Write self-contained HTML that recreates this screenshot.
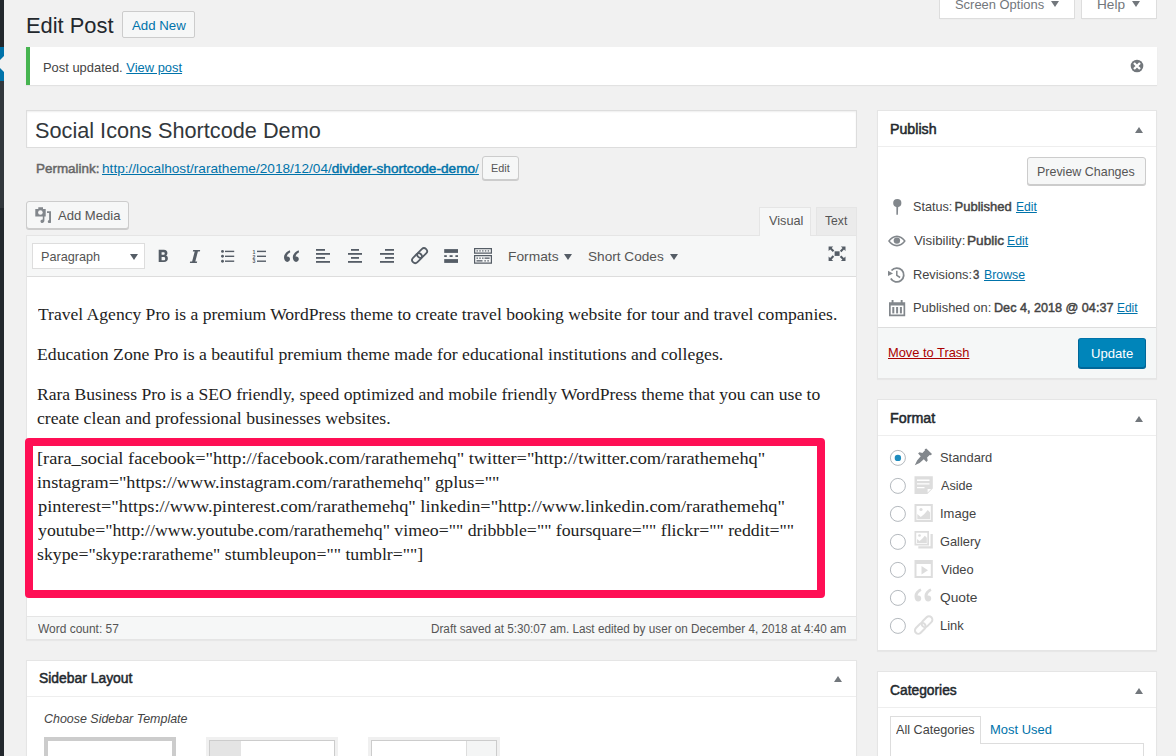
<!DOCTYPE html>
<html><head><meta charset="utf-8">
<style>
*{box-sizing:border-box;margin:0;padding:0}
html,body{width:1176px;height:756px;overflow:hidden;background:#f1f1f1;font-family:"Liberation Sans",sans-serif;color:#444;font-size:13px;position:relative}
.a{position:absolute}
.t{position:absolute;white-space:nowrap;line-height:1;transform-origin:0 0}
.sb{-webkit-text-stroke:0.45px}
.lnk{color:#0073aa;text-decoration:underline}
.btn{position:absolute;background:#f7f7f7;border:1px solid #ccc;border-radius:3px;box-shadow:0 1px 0 #ccc}
.box{position:absolute;background:#fff;border:1px solid #e5e5e5;box-shadow:0 1px 1px rgba(0,0,0,.04)}
.tri{position:absolute;width:0;height:0;border-left:4px solid transparent;border-right:4px solid transparent;border-bottom:6px solid #72777c}
.ic{position:absolute;fill:#555d66}
</style></head><body>
<!-- admin menu strip -->
<div class="a" style="left:0;top:0;width:4px;height:47px;background:#23282d"></div>
<div class="a" style="left:0;top:47px;width:4px;height:34px;background:#0073aa"></div>
<svg class="a" style="left:0;top:47px" width="4" height="34"><polygon points="4,9 -4,17 4,25" fill="#f1f1f1"/></svg>
<div class="a" style="left:0;top:81px;width:4px;height:127px;background:#32373c"></div>
<div class="a" style="left:0;top:208px;width:4px;height:548px;background:#23282d"></div>

<!-- Add New button -->
<div class="a" style="left:122px;top:11px;width:73px;height:27px;background:#f6f7f7;border:1px solid #ccc;border-radius:2px"></div>

<!-- screen options / help tabs -->
<div class="a" style="left:939px;top:-4px;width:136px;height:23px;background:#fff;border:1px solid #ddd;border-top:none;box-shadow:0 1px 1px -1px rgba(0,0,0,.1)"></div>
<div class="a" style="left:1050.5px;top:1px;width:0;height:0;border-left:4px solid transparent;border-right:4px solid transparent;border-top:6px solid #72777c"></div>
<div class="a" style="left:1081px;top:-4px;width:76px;height:23px;background:#fff;border:1px solid #ddd;border-top:none;box-shadow:0 1px 1px -1px rgba(0,0,0,.1)"></div>
<div class="a" style="left:1132px;top:1px;width:0;height:0;border-left:4px solid transparent;border-right:4px solid transparent;border-top:6px solid #72777c"></div>

<!-- notice -->
<div class="a" style="left:26px;top:47px;width:1131px;height:38px;background:#fff;border-left:4px solid #46b450;box-shadow:0 1px 1px rgba(0,0,0,.06)"></div>
<svg class="a" style="left:1130px;top:59px" width="14" height="14" viewBox="0 0 14 14"><circle cx="7" cy="7" r="6.3" fill="#72777c"/><path d="M4 4L10 10M10 4L4 10" stroke="#fff" stroke-width="2.3"/></svg>

<!-- title input -->
<div class="a" style="left:26px;top:110px;width:831px;height:38px;background:#fff;border:1px solid #ddd;box-shadow:inset 0 1px 2px rgba(0,0,0,.07)"></div>

<!-- permalink edit button -->
<div class="a" style="left:482px;top:156px;width:37px;height:24px;background:#f6f7f7;border:1px solid #ccc;border-radius:3px;box-shadow:0 1px 0 #ccc"></div>

<!-- add media button -->
<div class="a" style="left:26px;top:201px;width:103px;height:28px;background:#f6f7f7;border:1px solid #ccc;border-radius:3px;box-shadow:0 1px 0 #ccc"></div>
<svg class="a" style="left:30px;top:204px" width="24" height="22" viewBox="30 204 24 22"><g fill="#82878c"><path d="M35.3 209.1h3v-1.9h4.7v1.9h2.7v7.4h-10.4z"/><path d="M47 211.2h4v11c0 .8-.6 .9-1.6 .9s-1.6-.5-1.6-1.5c0-.9.7-1.4 1.3-1.5v-7h-2.1z"/><path d="M44.4 215v5.5c0 1.6-1 2.4-2.2 2.4-1 0-1.7-.6-1.7-1.5 0-1 .8-1.8 1.9-1.8.2 0 .3 0 .4 .1v-4.7z"/></g><circle cx="40.4" cy="212.5" r="2.3" fill="#f7f7f7"/></svg>

<!-- visual / text tabs -->
<div class="a" style="left:759px;top:207px;width:52px;height:30px;background:#f6f7f7;border:1px solid #e5e5e5;border-bottom:none"></div>
<div class="a" style="left:816px;top:207px;width:41px;height:29px;background:#ebebeb;border:1px solid #e5e5e5;border-bottom:none"></div>

<!-- editor frame -->
<div class="a" style="left:26px;top:235px;width:831px;height:382px;background:#fff;border:1px solid #e5e5e5"></div>
<div class="a" style="left:27px;top:236px;width:829px;height:41px;background:#f6f7f7;border-bottom:1px solid #ddd"></div>
<div class="a" style="left:760px;top:235px;width:50px;height:2px;background:#f6f7f7"></div>

<!-- formats arrows -->
<div class="a" style="left:564px;top:253.5px;width:0;height:0;border-left:4px solid transparent;border-right:4px solid transparent;border-top:6px solid #555d66"></div>
<div class="a" style="left:670px;top:253.5px;width:0;height:0;border-left:4px solid transparent;border-right:4px solid transparent;border-top:6px solid #555d66"></div>
<!-- paragraph select -->
<div class="a" style="left:32px;top:243px;width:113px;height:26px;background:#fff;border:1px solid #ddd"></div>
<div class="a" style="left:130px;top:254px;width:0;height:0;border-left:4px solid transparent;border-right:4px solid transparent;border-top:6px solid #555d66"></div>

<!-- toolbar icons -->
<svg class="a" style="left:150px;top:240px" width="700" height="30" viewBox="150 240 700 30">
 <g fill="#555d66">
  <!-- bold -->
  <path transform="translate(158.7 0) scale(0.9 1) translate(-158.7 0)" d="M158.7 249.7h5.8c2.6 0 3.9 1.5 3.9 3.3 0 1.2-.6 2.1-1.5 2.6 1.3.4 2 1.5 2 2.9 0 2.3-1.7 3.5-4.3 3.5h-5.9z M161.9 252.2v2.6h2.2c.8 0 1.3-.5 1.3-1.3s-.5-1.3-1.3-1.3z M161.9 257.1v3.1h2.5c.9 0 1.5-.6 1.5-1.55s-.6-1.55-1.5-1.55z" fill-rule="evenodd"/>
  <!-- italic -->
  <path d="M193.2 250h7l-.4 1.6h-1.9l-2.6 9.8h1.9l-.4 1.6h-7l.4-1.6h1.9l2.6-9.8h-1.9z"/>
  <!-- ul -->
  <circle cx="222.5" cy="251.4" r="1.45"/><circle cx="222.5" cy="256.3" r="1.45"/><circle cx="222.5" cy="261.2" r="1.45"/>
  <rect x="225" y="250.7" width="9.2" height="1.4"/><rect x="225" y="255.6" width="9.2" height="1.4"/><rect x="225" y="260.5" width="9.2" height="1.4"/>
  <!-- ol -->
  <text x="252.4" y="253.6" font-size="5.2" font-family="Liberation Sans" font-weight="bold">1</text>
  <text x="252.4" y="258.5" font-size="5.2" font-family="Liberation Sans" font-weight="bold">2</text>
  <text x="252.4" y="263.4" font-size="5.2" font-family="Liberation Sans" font-weight="bold">3</text>
  <rect x="257" y="250.7" width="9" height="1.4"/><rect x="257" y="255.6" width="9" height="1.4"/><rect x="257" y="260.5" width="9" height="1.4"/>
  <!-- quote -->
  <path d="M289.8 250.2c-3 1.2-5.8 3.8-5.8 7.1 0 2.6 1.4 4.6 3.3 4.6 1.6 0 2.7-1.2 2.7-2.8 0-1.5-1-2.6-2.5-2.6-.3 0-.6 0-.8.1.4-1.8 1.9-3.4 3.6-4.3z M298.6 250.2c-3 1.2-5.8 3.8-5.8 7.1 0 2.6 1.4 4.6 3.3 4.6 1.6 0 2.7-1.2 2.7-2.8 0-1.5-1-2.6-2.5-2.6-.3 0-.6 0-.8.1.4-1.8 1.9-3.4 3.6-4.3z"/>
  <!-- align left -->
  <rect x="316" y="249" width="9" height="1.8"/><rect x="316" y="253" width="14" height="1.8"/><rect x="316" y="257" width="9" height="1.8"/><rect x="316" y="261" width="14" height="1.8"/>
  <!-- align center -->
  <rect x="351" y="249" width="8" height="1.8"/><rect x="348" y="253" width="14" height="1.8"/><rect x="351" y="257" width="8" height="1.8"/><rect x="348" y="261" width="14" height="1.8"/>
  <!-- align right -->
  <rect x="385" y="249" width="9" height="1.8"/><rect x="380" y="253" width="14" height="1.8"/><rect x="385" y="257" width="9" height="1.8"/><rect x="380" y="261" width="14" height="1.8"/>
  <!-- more -->
  <rect x="444.2" y="249.1" width="13.8" height="3.8"/><rect x="444.2" y="259.1" width="13.8" height="3.8"/>
  <rect x="444.2" y="255.2" width="2.6" height="1.8"/><rect x="449.6" y="255.2" width="3" height="1.8"/><rect x="455.4" y="255.2" width="2.6" height="1.8"/>
  <!-- toggle -->
  <path d="M474 248h18v5.8h-18z M475.2 249.2v3.4h15.6v-3.4z" fill-rule="evenodd"/>
  <rect x="476.5" y="250.3" width="1.4" height="1.2"/><rect x="479.3" y="250.3" width="1.4" height="1.2"/><rect x="482.1" y="250.3" width="1.4" height="1.2"/><rect x="484.9" y="250.3" width="1.4" height="1.2"/><rect x="487.7" y="250.3" width="1.4" height="1.2"/>
  <path d="M474 255h18v8.8h-18z M475.2 256.2v6.4h15.6v-6.4z" fill-rule="evenodd"/>
  <rect x="476.5" y="257.5" width="1.4" height="1.3"/><rect x="479.3" y="257.5" width="1.4" height="1.3"/><rect x="482.1" y="257.5" width="1.4" height="1.3"/><rect x="484.6" y="257.5" width="5" height="1.3"/>
  <rect x="476.5" y="260.2" width="6" height="1.3"/><rect x="484.4" y="260.2" width="1.4" height="1.3"/><rect x="487.4" y="260.2" width="1.4" height="1.3"/>
  <!-- fullscreen -->
  <rect x="834.6" y="251.3" width="5" height="4.6"/>
  <path d="M828.6 246.5h4.6l-1.5 1.5 2.6 2.6-1.5 1.5-2.6-2.6-1.6 1.6z M845.5 246.5v4.6l-1.5-1.5-2.6 2.6-1.5-1.5 2.6-2.6-1.6-1.6z M828.6 261v-4.6l1.5 1.5 2.6-2.6 1.5 1.5-2.6 2.6 1.6 1.6z M845.5 261h-4.6l1.5-1.5-2.6-2.6 1.5-1.5 2.6 2.6 1.6-1.6z"/>
 </g>
 <!-- link -->
 <g fill="none" stroke="#555d66" stroke-width="1.8">
  <rect x="-5.6" y="-3.1" width="11.2" height="6.2" rx="3.1" transform="translate(422.2,253) rotate(-45)"/>
  <rect x="-5.6" y="-3.1" width="11.2" height="6.2" rx="3.1" transform="translate(417,258.2) rotate(-45)"/>
 </g>
</svg>

<!-- red highlight box -->
<div class="a" style="left:25px;top:438px;width:800px;height:160px;border:8px solid #ff0f55;border-radius:4px"></div>

<!-- status bar -->
<div class="a" style="left:26px;top:616px;width:831px;height:24px;background:#f6f7f7;border:1px solid #e5e5e5;box-shadow:0 1px 1px rgba(0,0,0,.04)"></div>

<!-- sidebar layout box -->
<div class="box" style="left:26px;top:660px;width:831px;height:140px"></div>
<div class="a" style="left:27px;top:696px;width:829px;height:1px;background:#eee"></div>
<div class="tri" style="left:834px;top:676px"></div>
<div class="a" style="left:44px;top:737px;width:132px;height:40px;border:4px solid #ccc;background:#fff"></div>
<div class="a" style="left:206px;top:737px;width:132px;height:40px;background:#f0f0f0"></div>
<div class="a" style="left:209px;top:740px;width:126px;height:40px;background:#fff;border:1px solid #ccc"></div>
<div class="a" style="left:210px;top:741px;width:31px;height:40px;background:#e4e4e4"></div>
<div class="a" style="left:368px;top:737px;width:132px;height:40px;background:#f0f0f0"></div>
<div class="a" style="left:371px;top:740px;width:126px;height:40px;background:#fff;border:1px solid #ccc"></div>
<div class="a" style="left:466px;top:741px;width:30px;height:40px;background:#f4f5f5;border-left:1px solid #ddd"></div>

<!-- publish box -->
<div class="box" style="left:877px;top:110px;width:280px;height:269px"></div>
<div class="a" style="left:878px;top:146px;width:278px;height:1px;background:#eee"></div>
<div class="tri" style="left:1135px;top:127px"></div>
<div class="a" style="left:1027px;top:157px;width:119px;height:28px;background:#f6f7f7;border:1px solid #ccc;border-radius:3px;box-shadow:0 1px 0 #ccc"></div>
<svg class="a" style="left:880px;top:190px" width="40" height="135" viewBox="880 190 40 135">
 <g fill="#82878c">
  <!-- pin -->
  <circle cx="897.3" cy="203.1" r="4.1"/><path d="M896.4 206h1.8l-.3 8.8h-1.5z"/>
  <!-- eye -->
  <path d="M888 241c2.3-3.3 5.4-5.4 8.9-5.4s6.6 2.1 8.9 5.4c-2.3 3.3-5.4 5.5-8.9 5.5s-6.6-2.2-8.9-5.5z M889.9 241c1.8 2.2 4.2 3.7 7 3.7s5.2-1.5 7-3.7c-1.8-2.2-4.2-3.7-7-3.7s-5.2 1.5-7 3.7z" fill-rule="evenodd"/>
  <circle cx="896.9" cy="240.6" r="3.2"/>
  <!-- history -->
 </g>
 <g fill="none" stroke="#82878c" stroke-width="1.8">
  <path d="M891.5 270.5A6.95 6.95 0 1 1 890.8 278.5"/>
  <path d="M896.8 270.8v4.6l3.3 2.1" stroke-width="1.5"/>
 </g>
 <g fill="#82878c">
  <path d="M888 270.8v5.2l5-2.4z"/>
  <!-- calendar -->
  <path d="M889 302.3h16.2v13.9h-16.2z M890.7 305.6v8.9h12.8v-8.9z" fill-rule="evenodd"/>
  <rect x="891.6" y="300" width="1.9" height="4.2"/><rect x="900.7" y="300" width="1.9" height="4.2"/>
  <rect x="892.3" y="307" width="2" height="6.4"/><rect x="896.1" y="307" width="2" height="6.4"/><rect x="899.9" y="307" width="2" height="6.4"/>
 </g>
</svg>
<div class="a" style="left:878px;top:327px;width:278px;height:51px;background:#f5f7f7;border-top:1px solid #ddd"></div>
<div class="a" style="left:1078px;top:338px;width:68px;height:30px;background:#0085ba;border:1px solid;border-color:#0073aa #006799 #006799;border-radius:3px;box-shadow:0 1px 0 #006799"></div>

<!-- format box -->
<div class="box" style="left:877px;top:399px;width:280px;height:252px"></div>
<div class="a" style="left:878px;top:435px;width:278px;height:1px;background:#eee"></div>
<div class="tri" style="left:1135px;top:416px"></div>
<svg class="a" style="left:880px;top:440px" width="60" height="200" viewBox="880 440 60 200">
 <g fill="#fff" stroke="#b4b9be" stroke-width="1">
  <circle cx="897.9" cy="457.9" r="7.5"/><circle cx="897.9" cy="485.9" r="7.5"/><circle cx="897.9" cy="513.9" r="7.5"/><circle cx="897.9" cy="541.9" r="7.5"/><circle cx="897.9" cy="569.9" r="7.5"/><circle cx="897.9" cy="597.9" r="7.5"/><circle cx="897.9" cy="625.9" r="7.5"/>
 </g>
 <circle cx="897.9" cy="457.9" r="3.2" fill="#1e8cbe"/>
 <!-- pin -->
 <path d="M926.3 448.4l5.7 5.7-1.2 1.2-1.1-.3-2.6 2.6.6 3-1.3 1.3-2.6-2.6-4.2 3.6-4.8 2.3 2.3-4.8 3.6-4.2-2.6-2.6 1.3-1.3 3 .6 2.6-2.6-.3-1.1z" fill="#82878c"/>
 <g fill="#ddd">
  <!-- aside -->
  <path d="M914.5 476.3h18.3v12.2l-5.5 5.5h-12.8z M917 479.5v1.4h12.5v-1.4z M917 483.2v1.4h12.5v-1.4z M917 486.9v1.4h7.5v-1.4z M927.6 489v3.5l3.5-3.5z" fill-rule="evenodd"/>
  <!-- image -->
  <path d="M914.5 504h18.3v18h-18.3z M916.5 506v14h14.3v-14z" fill-rule="evenodd"/>
  <path d="M917.3 519.3v-5.3l3.5 3 3.5-3 3.5-4 2.3 2.5v6.8z"/><circle cx="921" cy="509.5" r="1.6"/>
  <!-- gallery -->
  <g transform="translate(0 2)">
  <path d="M914.5 529h14.5v14.5h-14.5z M916.2 530.7v11.1h11.1v-11.1z" fill-rule="evenodd"/>
  <path d="M917 541v-4l2.6 2 2.6-2.2 2.6-3 2 2v5.2z"/><circle cx="919.5" cy="533.5" r="1.3"/>
  <path d="M930.5 532h2.3v14.5h-14.5v-2.3h12.2z"/>
  </g>
  <!-- video -->
  <path d="M914.5 560h18.3v18h-18.3z M916.5 564v12h14.3v-12z" fill-rule="evenodd"/>
  <path d="M921.5 566v8.5l6.5-4.25z"/>
  <!-- quote -->
  <path d="M920.5 588.5c-3.4 1.4-6 4.3-6 7.9 0 2.9 1.6 5.1 3.7 5.1 1.8 0 3-1.3 3-3.1 0-1.7-1.1-2.9-2.8-2.9-.3 0-.6 0-.9.1.4-2 2.1-3.8 4-4.8z M930.5 588.5c-3.4 1.4-6 4.3-6 7.9 0 2.9 1.6 5.1 3.7 5.1 1.8 0 3-1.3 3-3.1 0-1.7-1.1-2.9-2.8-2.9-.3 0-.6 0-.9.1.4-2 2.1-3.8 4-4.8z"/>
 </g>
 <g fill="none" stroke="#ddd" stroke-width="2">
  <rect x="-6.2" y="-3.4" width="12.4" height="6.8" rx="3.4" transform="translate(927,621.7) rotate(-45)"/>
  <rect x="-6.2" y="-3.4" width="12.4" height="6.8" rx="3.4" transform="translate(920.3,628.4) rotate(-45)"/>
 </g>
</svg>

<!-- categories box -->
<div class="box" style="left:877px;top:671px;width:280px;height:140px"></div>
<div class="a" style="left:878px;top:707px;width:278px;height:1px;background:#eee"></div>
<div class="tri" style="left:1135px;top:688px"></div>
<div class="a" style="left:890px;top:743px;width:254px;height:40px;border:1px solid #ddd;background:#fff"></div>
<div class="a" style="left:890px;top:716px;width:91px;height:28px;border:1px solid #ddd;border-bottom:none;background:#fff"></div>

<div class="t" style="left:25.74px;top:15.00px;font-size:22.3px;color:#23282d;transform:scaleX(0.9805);">Edit Post</div>
<div class="t" style="left:132.00px;top:19.00px;font-size:13px;color:#0073aa;transform:scaleX(1.0189);">Add New</div>
<div class="t" style="left:954.51px;top:-2.00px;font-size:13px;color:#72777c;transform:scaleX(0.9943);">Screen Options</div>
<div class="t" style="left:1097.35px;top:-2.00px;font-size:13px;color:#72777c;transform:scaleX(1.0480);">Help</div>
<div class="t" style="left:43.41px;top:61.00px;font-size:13px;color:#444;transform:scaleX(0.9935);">Post updated. <span class="lnk">View post</span></div>
<div class="t" style="left:34.71px;top:120.00px;font-size:22px;color:#32373c;transform:scaleX(0.9861);">Social Icons Shortcode Demo</div>
<div class="t" style="left:35.57px;top:162.00px;font-size:13px;color:#666;transform:scaleX(1.0333);"><span class="sb">Permalink:</span></div>
<div class="t" style="left:101.90px;top:162.00px;font-size:13px;color:#666;transform:scaleX(1.0493);"><span class="lnk">http://localhost/raratheme/2018/12/04/<span class="sb">divider-shortcode-demo</span>/</span></div>
<div class="t" style="left:490.82px;top:163.00px;font-size:11px;color:#555;transform:scaleX(0.9833);">Edit</div>
<div class="t" style="left:58.20px;top:209.00px;font-size:13px;color:#555;transform:scaleX(1.0048);">Add Media</div>
<div class="t" style="left:768.80px;top:214.00px;font-size:13px;color:#555;transform:scaleX(0.9765);">Visual</div>
<div class="t" style="left:825.40px;top:214.00px;font-size:13px;color:#555;transform:scaleX(0.9333);">Text</div>
<div class="t" style="left:41.13px;top:250.00px;font-size:13px;color:#555;transform:scaleX(0.9746);">Paragraph</div>
<div class="t" style="left:507.54px;top:250.00px;font-size:13px;color:#555;transform:scaleX(1.0609);">Formats</div>
<div class="t" style="left:587.95px;top:250.00px;font-size:13px;color:#555;transform:scaleX(1.0479);">Short Codes</div>
<div class="t" style="left:37.60px;top:306.00px;font-size:17px;font-family:'Liberation Serif',serif;color:#222;transform:scaleX(1.0329);">Travel Agency Pro is a premium WordPress theme to create travel booking website for tour and travel companies.</div>
<div class="t" style="left:36.56px;top:346.00px;font-size:17px;font-family:'Liberation Serif',serif;color:#222;transform:scaleX(1.0398);">Education Zone Pro is a beautiful premium theme made for educational institutions and colleges.</div>
<div class="t" style="left:36.57px;top:386.00px;font-size:17px;font-family:'Liberation Serif',serif;color:#222;transform:scaleX(1.0336);">Rara Business Pro is a SEO friendly, speed optimized and mobile friendly WordPress theme that you can use to</div>
<div class="t" style="left:36.56px;top:410.00px;font-size:17px;font-family:'Liberation Serif',serif;color:#222;transform:scaleX(1.0402);">create clean and professional businesses websites.</div>
<div class="t" style="left:36.92px;top:450.00px;font-size:17px;font-family:'Liberation Serif',serif;color:#222;transform:scaleX(1.0777);">[rara_social facebook="http://facebook.com/rarathemehq" twitter="http://twitter.com/rarathemehq"</div>
<div class="t" style="left:36.53px;top:474.00px;font-size:17px;font-family:'Liberation Serif',serif;color:#222;transform:scaleX(1.0694);">instagram="https://www.instagram.com/rarathemehq" gplus=""</div>
<div class="t" style="left:37.60px;top:498.00px;font-size:17px;font-family:'Liberation Serif',serif;color:#222;transform:scaleX(1.0765);">pinterest="https://www.pinterest.com/rarathemehq" linkedin="http://www.linkedin.com/rarathemehq"</div>
<div class="t" style="left:37.60px;top:522.00px;font-size:17px;font-family:'Liberation Serif',serif;color:#222;transform:scaleX(1.0448);">youtube="http://www.youtube.com/rarathemehq" vimeo="" dribbble="" foursquare="" flickr="" reddit=""</div>
<div class="t" style="left:36.56px;top:546.00px;font-size:17px;font-family:'Liberation Serif',serif;color:#222;transform:scaleX(1.0446);">skype="skype:raratheme" stumbleupon="" tumblr=""]</div>
<div class="t" style="left:37.50px;top:623.00px;font-size:12px;color:#555;transform:scaleX(0.9963);">Word count: 57</div>
<div class="t" style="left:431.22px;top:623.00px;font-size:12px;color:#555;transform:scaleX(0.9773);">Draft saved at 5:30:07 am. Last edited by user on December 4, 2018 at 4:40 am</div>
<div class="t" style="left:39.30px;top:671.00px;font-size:14px;-webkit-text-stroke:0.5px;color:#23282d;transform:scaleX(0.9916);">Sidebar Layout</div>
<div class="t" style="left:43.64px;top:712.00px;font-size:13px;font-style:italic;color:#444;transform:scaleX(0.9574);">Choose Sidebar Template</div>
<div class="t" style="left:889.69px;top:122.00px;font-size:14px;-webkit-text-stroke:0.5px;color:#23282d;transform:scaleX(1.0133);">Publish</div>
<div class="t" style="left:1037.24px;top:165.00px;font-size:13px;color:#555;transform:scaleX(0.9584);">Preview Changes</div>
<div class="t" style="left:912.93px;top:200.00px;font-size:13px;color:#444;transform:scaleX(0.9711);">Status:</div>
<div class="t" style="left:954.60px;top:200.00px;font-size:13px;color:#444;"><span class="sb">Published</span></div>
<div class="t" style="left:1016.30px;top:200.00px;font-size:13px;color:#444;transform:scaleX(0.9304);"><span class="lnk">Edit</span></div>
<div class="t" style="left:913.90px;top:234.00px;font-size:13px;color:#444;transform:scaleX(1.0204);">Visibility:</div>
<div class="t" style="left:967.05px;top:234.00px;font-size:13px;color:#444;transform:scaleX(1.0500);"><span class="sb">Public</span></div>
<div class="t" style="left:1007.10px;top:234.00px;font-size:13px;color:#444;transform:scaleX(0.9435);"><span class="lnk">Edit</span></div>
<div class="t" style="left:913.22px;top:268.00px;font-size:13px;color:#444;transform:scaleX(0.9845);">Revisions:</div>
<div class="t" style="left:973.40px;top:268.00px;font-size:13px;color:#444;transform:scaleX(0.8714);"><span class="sb">3</span></div>
<div class="t" style="left:983.60px;top:268.00px;font-size:13px;color:#444;transform:scaleX(0.9488);"><span class="lnk">Browse</span></div>
<div class="t" style="left:913.21px;top:301.00px;font-size:13px;color:#444;transform:scaleX(0.9935);">Published on:</div>
<div class="t" style="left:993.83px;top:301.00px;font-size:13px;color:#444;transform:scaleX(0.9705);"><span class="sb">Dec 4, 2018 @ 04:37</span></div>
<div class="t" style="left:1116.60px;top:301.00px;font-size:13px;color:#444;transform:scaleX(0.9174);"><span class="lnk">Edit</span></div>
<div class="t" style="left:888.00px;top:346.00px;font-size:13px;color:#a00;transform:scaleX(0.9878);"><span style="text-decoration:underline">Move to Trash</span></div>
<div class="t" style="left:1090.59px;top:347.00px;font-size:13px;color:#fff;transform:scaleX(1.0073);">Update</div>
<div class="t" style="left:889.58px;top:411.00px;font-size:14px;-webkit-text-stroke:0.5px;color:#23282d;transform:scaleX(1.0182);">Format</div>
<div class="t" style="left:940.01px;top:451.00px;font-size:13px;color:#444;transform:scaleX(0.9902);">Standard</div>
<div class="t" style="left:941.00px;top:479.00px;font-size:13px;color:#444;transform:scaleX(0.9688);">Aside</div>
<div class="t" style="left:940.00px;top:507.00px;font-size:13px;color:#444;">Image</div>
<div class="t" style="left:940.01px;top:535.00px;font-size:13px;color:#444;transform:scaleX(0.9850);">Gallery</div>
<div class="t" style="left:941.00px;top:563.00px;font-size:13px;color:#444;transform:scaleX(0.9879);">Video</div>
<div class="t" style="left:939.94px;top:591.00px;font-size:13px;color:#444;transform:scaleX(1.0588);">Quote</div>
<div class="t" style="left:940.00px;top:619.00px;font-size:13px;color:#444;transform:scaleX(0.9957);">Link</div>
<div class="t" style="left:890.00px;top:683.00px;font-size:14px;-webkit-text-stroke:0.5px;color:#23282d;transform:scaleX(0.9853);">Categories</div>
<div class="t" style="left:896.40px;top:723.00px;font-size:13px;color:#444;transform:scaleX(0.9704);">All Categories</div>
<div class="t" style="left:990.30px;top:723.00px;font-size:13px;color:#0073aa;transform:scaleX(0.9951);">Most Used</div>
</body></html>
